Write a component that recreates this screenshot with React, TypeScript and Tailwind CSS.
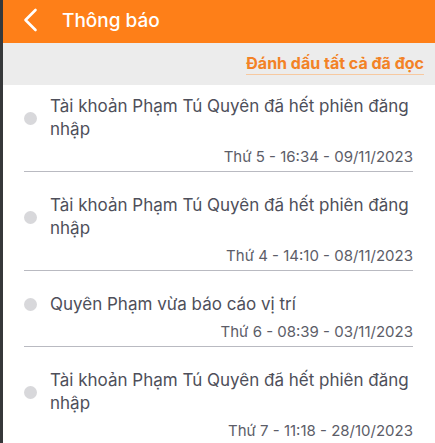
const notifications = [
  { text: 'Tài khoản Phạm Tú Quyên đã hết phiên đăng nhập', time: 'Thứ 5 - 16:34 - 09/11/2023' },
  { text: 'Tài khoản Phạm Tú Quyên đã hết phiên đăng nhập', time: 'Thứ 4 - 14:10 - 08/11/2023' },
  { text: 'Quyên Phạm vừa báo cáo vị trí', time: 'Thứ 6 - 08:39 - 03/11/2023' },
  { text: 'Tài khoản Phạm Tú Quyên đã hết phiên đăng nhập', time: 'Thứ 7 - 11:18 - 28/10/2023' },
];

export default function App() {
  return (
    <div className="flex h-[443px] w-[435px] overflow-hidden bg-white font-['Inter',sans-serif]">
      <div className="w-[3px] shrink-0 bg-[#36383a]" />
      <div className="flex min-w-0 flex-1 flex-col">
        {/* Header */}
        <div className="flex h-[43px] shrink-0 items-center bg-[#fe7f18] text-white">
          <svg className="mb-[4px] ml-[20px] h-[24px] w-[15px]" viewBox="0 0 15 24" fill="none">
            <polyline points="12.5,2 2.5,12 12.5,22" stroke="white" strokeWidth="2.6" strokeLinecap="round" strokeLinejoin="round" />
          </svg>
          <h1 className="mb-[2px] ml-[24px] text-[19px] font-medium leading-none">Thông báo</h1>
        </div>

        {/* Mark all read */}
        <div className="flex h-[42px] shrink-0 items-center justify-end bg-[#ececec] pr-[11px]">
          <button className="border-b border-[#f7c9a0] pb-[1px] text-[16px] font-bold leading-[20px] text-[#f38226]">
            Đánh dấu tất cả đã đọc
          </button>
        </div>

        {/* List */}
        <div className="flex flex-col pl-[21px] pr-[22px]">
          {notifications.map((n, i) => (
            <div key={i} className={i > 0 ? 'pt-[22px]' : 'pt-[10px]'}>
              <div className="flex items-center">
                <span className="h-[13px] w-[13px] shrink-0 rounded-full bg-[#d8d8db]" />
                <p className="ml-[13px] text-[17px] leading-[23px] text-[#4e4f5a]">{n.text}</p>
              </div>
              <div className="mt-[6px] text-right text-[15px] leading-[20px] text-[#5c5d68]">{n.time}</div>
              {i < notifications.length - 1 && <div className="mt-[4px] h-px bg-[#b9bac1]" />}
            </div>
          ))}
        </div>
      </div>
    </div>
  );
}
